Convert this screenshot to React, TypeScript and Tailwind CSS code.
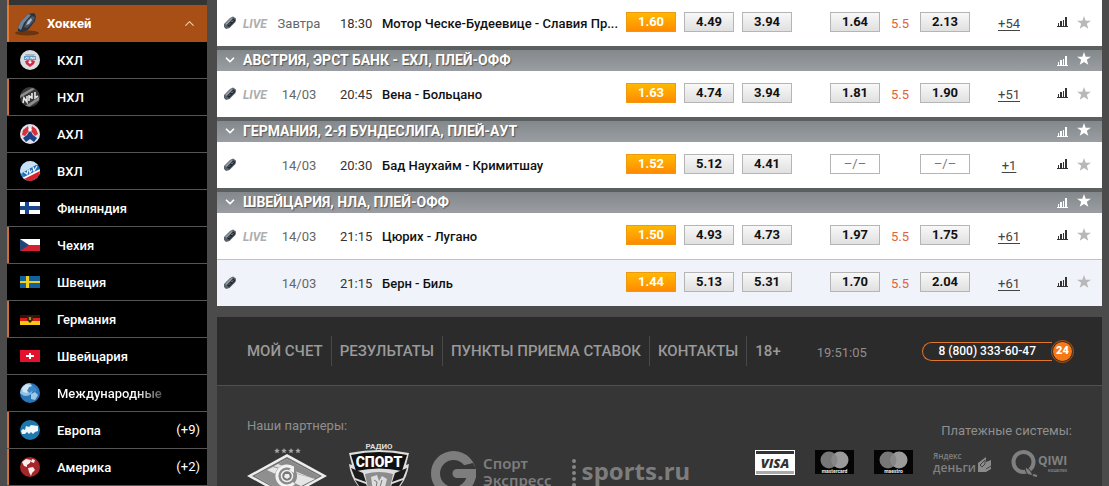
import { ReactNode } from 'react';
import { ChevronDown, ChevronUp } from 'lucide-react';

/* ── Data ── */

type League = { name: string; icon: ReactNode; accent?: boolean; count?: string; faded?: boolean };

type Match = {
  live: boolean;
  date: string;
  time: string;
  name: string;
  odds: string[];
  under: string | null;
  total: string;
  over: string | null;
  more: string;
  tinted?: boolean;
};

type Group = { title: string | null; matches: Match[] };

const groups: Group[] = [
  {
    title: null,
    matches: [
      { live: true, date: 'Завтра', time: '18:30', name: 'Мотор Ческе-Будеевице - Славия Пр...', odds: ['1.60', '4.49', '3.94'], under: '1.64', total: '5.5', over: '2.13', more: '+54' },
    ],
  },
  {
    title: 'АВСТРИЯ, ЭРСТ БАНК - ЕХЛ, ПЛЕЙ-ОФФ',
    matches: [
      { live: true, date: '14/03', time: '20:45', name: 'Вена - Больцано', odds: ['1.63', '4.74', '3.94'], under: '1.81', total: '5.5', over: '1.90', more: '+51' },
    ],
  },
  {
    title: 'ГЕРМАНИЯ, 2-Я БУНДЕСЛИГА, ПЛЕЙ-АУТ',
    matches: [
      { live: false, date: '14/03', time: '20:30', name: 'Бад Наухайм - Кримитшау', odds: ['1.52', '5.12', '4.41'], under: null, total: '', over: null, more: '+1' },
    ],
  },
  {
    title: 'ШВЕЙЦАРИЯ, НЛА, ПЛЕЙ-ОФФ',
    matches: [
      { live: true, date: '14/03', time: '21:15', name: 'Цюрих - Лугано', odds: ['1.50', '4.93', '4.73'], under: '1.97', total: '5.5', over: '1.75', more: '+61' },
      { live: false, date: '14/03', time: '21:15', name: 'Берн - Биль', odds: ['1.44', '5.13', '5.31'], under: '1.70', total: '5.5', over: '2.04', more: '+61', tinted: true },
    ],
  },
];

/* ── Sidebar icons ── */

function Round({ id, base, children }: { id: string; base: string; children: ReactNode }) {
  return (
    <svg width="20" height="20" viewBox="0 0 20 20" aria-hidden="true">
      <clipPath id={id}><circle cx="10" cy="10" r="10" /></clipPath>
      <g clipPath={`url(#${id})`}>
        <rect width="20" height="20" fill={base} />
        {children}
      </g>
    </svg>
  );
}

function Flag({ children }: { children: ReactNode }) {
  return <svg width="20" height="12" viewBox="0 0 20 12" aria-hidden="true">{children}</svg>;
}

const leagues: League[] = [
  {
    name: 'КХЛ',
    icon: (
      <Round id="khl" base="#d9dde0">
        <path d="M5 4h10l-1 2H6z" fill="#aab4bd" />
        <path d="M4 6h12v4H4z" fill="#5f9bcb" />
        <path d="M5 9l2-2M8 9V7M11 9V7l2 2V7M14 9l1-2" stroke="#e8f1f8" fill="none" />
        <path d="M5 11l3-1 2 1 2-1 3 1-1 3-4 3-4-3z" fill="#cf2a41" />
        <path d="M8 12l2 2 2-2-2-1z" fill="#fff" />
      </Round>
    ),
  },
  {
    name: 'НХЛ',
    accent: true,
    icon: (
      <Round id="nhl" base="#3a3a3a">
        <path d="M0 8L12 1l3 1L0 11zM5 19l14-9v3L9 20z" fill="#8d8d8d" />
        <path d="M3 16l1-5 3 4V9M9 14V8M9 11l3-2M12 12V6M15 5v6l3-2" stroke="#e6e6e6" strokeWidth="1.6" fill="none" />
      </Round>
    ),
  },
  {
    name: 'АХЛ',
    icon: (
      <Round id="ahl" base="#dfe3ea">
        <path d="M3 6l5-4 1 5-4 5-3-1z" fill="#d6323c" />
        <path d="M12 2l4 3 2 5-3 2-4-5z" fill="#d6323c" />
        <path d="M3 14l4-3 3-5 3 5 4 3-3 4-4-3-4 3z" fill="#1c3f86" />
        <path d="M8 6l2-3 2 3-2 2z" fill="#fff" />
      </Round>
    ),
  },
  {
    name: 'ВХЛ',
    icon: (
      <Round id="vhl" base="#2f8fd3">
        <path d="M0 0h20v3L3 13 0 12z" fill="#c8e1f3" />
        <path d="M2 12l14-8 4 1v5L5 17z" fill="#1e6fb9" />
        <path d="M4 11l3 2 1-4M9 8l1 4 2-3M13 6l1 4 3-5" stroke="#e9f4fb" strokeWidth="1.3" fill="none" />
        <path d="M2 17L20 8v5L6 20z" fill="#fff" />
        <path d="M4 18l16-8v10H5z" fill="#d8232a" />
      </Round>
    ),
  },
  {
    name: 'Финляндия',
    icon: <Flag><path d="M0 0h20v12H0z" fill="#fff" /><path d="M5 0h4v12H5zM0 4h20v4H0z" fill="#18478f" /></Flag>,
  },
  {
    name: 'Чехия',
    accent: true,
    icon: <Flag><path d="M0 0h20v6H0z" fill="#fff" /><path d="M0 6h20v6H0z" fill="#d4202f" /><path d="M0 0l9 6-9 6z" fill="#1f4678" /></Flag>,
  },
  {
    name: 'Швеция',
    icon: <Flag><path d="M0 0h20v12H0z" fill="#12619b" /><path d="M6 0h3v12H6zM0 5h20v2H0z" fill="#f2cf1f" /></Flag>,
  },
  {
    name: 'Германия',
    accent: true,
    icon: (
      <Flag>
        <path d="M0 2h20v3H0z" fill="#2c1513" /><path d="M0 5h20v3H0z" fill="#dc2016" /><path d="M0 8h20v4H0z" fill="#f5c816" />
        <path d="M7 3l3 1 3-1v4l-3 3-3-3z" fill="#3b2b0c" /><path d="M9 4h2v3H9z" fill="#b98a1b" />
      </Flag>
    ),
  },
  {
    name: 'Швейцария',
    icon: <Flag><path d="M0 0h20v12H0z" fill="#e2112d" /><path d="M9 3h2v2h3v2h-3v2H9V7H6V5h3z" fill="#fff" /></Flag>,
  },
  {
    name: 'Международные',
    faded: true,
    icon: (
      <Round id="world" base="#2a76b8">
        <circle cx="6" cy="6" r="7" fill="#8fc1e6" />
        <path d="M2 5l4-4 5 1-1 4-3 4-4-1z" fill="#cfe5f5" />
        <path d="M9 4l4-1 4 3-1 3-4-1-2 2-3-2z" fill="#3f86c2" />
        <path d="M11 11l4-2 3 3-3 5-4-1z" fill="#9cc9e9" />
      </Round>
    ),
  },
  {
    name: 'Европа',
    accent: true,
    count: '(+9)',
    icon: (
      <Round id="europe" base="#1d78ad">
        <path d="M1 11l2-2 2 1 1-4 3 1 2-2 7 1v5l-3 1-2 2-2-2-2 2-2-2-2 2H2z" fill="#eef7fb" />
      </Round>
    ),
  },
  {
    name: 'Америка',
    accent: true,
    count: '(+2)',
    icon: (
      <Round id="america" base="#a52529">
        <path d="M2 5l4-3 5 1-1 3-3 2v2L4 9zM12 2l3 1-1 3-3-1zM8 11l5-1 2 3-3 3-1 3-2-4z" fill="#fbeeee" />
      </Round>
    ),
  },
];

/* ── Table icons ── */

function Puck() {
  return (
    <svg width="14" height="14" viewBox="0 0 14 14" aria-hidden="true">
      <path d="M1 8l6-6 3-1.500 3 2-.5 3.500-6 6-3.500 1L1 11z" fill="#59616b" />
      <path d="M2 8l5.500-5.500 2.500-1-2 3-4 4.500z" fill="#939ba4" />
      <path d="M5 10L11.500 3.500" stroke="#22272d" strokeWidth="3" />
      <path d="M6 8.500l1-1M8.500 6L10 4.500" stroke="#b5bcc2" />
    </svg>
  );
}

function BigPuck() {
  return (
    <svg width="26" height="24" viewBox="0 0 26 24" aria-hidden="true">
      <ellipse cx="12" cy="21" rx="12" ry="2.500" fill="#6b330e" />
      <path d="M3 16l3-7 7-7 6-1 2 3-1 5-7 9-6 2-4-1z" fill="#2b323b" />
      <path d="M3 16l3-7 7-7 3 1-7 8-3 7z" fill="#6f8396" />
      <path d="M9 15l3-6 5-5 3 1-2 5-6 6z" fill="#48566a" />
      <path d="M11 13l2-4 3-3 1 2-3 4z" fill="#a9bccb" />
    </svg>
  );
}

function Bars() {
  return (
    <svg width="11" height="10" viewBox="0 0 11 10" fill="currentColor" aria-hidden="true">
      <path d="M0 9h11v1H0zM1 6h1v3H1zM3 4h2v5H3zM6 3h1v6H6zM8 0h2v9H8z" />
    </svg>
  );
}

function Star() {
  return (
    <svg width="14" height="13" viewBox="0 0 14 13" fill="currentColor" aria-hidden="true">
      <path d="M7 0l1.7 4.7H14L9.8 7.8l1.5 5L7 9.9l-4.3 2.9 1.5-5L0 4.7h5.3z" />
    </svg>
  );
}

/* ── Events ── */

function Odd({ value, favourite }: { value: string | null; favourite?: boolean }) {
  const look = favourite
    ? 'border-[#ee9a10] bg-linear-to-b from-[#ffb900] to-[#ff8a00] text-white'
    : value
      ? 'border-[#b5b5b5] bg-linear-to-b from-[#f8f8f8] to-[#e0e0e0] text-[#111]'
      : 'border-[#b5b5b5] bg-white text-[#777]';
  return (
    <td className="pb-0.5">
      <button className={`mx-auto block h-5 w-[50px] border text-[13px] leading-[18px] font-bold ${look}`}>
        {value ?? <span className="font-normal">–/–</span>}
      </button>
    </td>
  );
}

function MatchRow({ match }: { match: Match }) {
  return (
    <tr className={match.tinted ? 'h-[47px] border-t border-[#bfc1c4] bg-[#f0f3fa]' : 'h-[46px] bg-white'}>
      <td className="pl-1.5"><Puck /></td>
      <td className="pt-0.5 pl-0.5 text-xs font-bold text-[#adadad] italic">{match.live && 'LIVE'}</td>
      <td className="pt-0.5 text-center text-[#666]">{match.date}</td>
      <td className="pt-0.5 pl-[11px] text-[#333]">{match.time}</td>
      <td className="truncate pt-0.5 font-medium text-[#111]">{match.name}</td>
      {match.odds.map((odd, i) => <Odd key={i} value={odd} favourite={i === 0} />)}
      <td />
      <Odd value={match.under} />
      <td className="pt-0.5 text-center text-[#e0623a]">{match.total}</td>
      <Odd value={match.over} />
      <td className="pt-0.5 text-center"><a href="#" className="text-[#444] underline underline-offset-2">{match.more}</a></td>
      <td className="pb-0.5">
        <button className="ml-[13px] block text-[#333]" aria-label="Статистика"><Bars /></button>
      </td>
      <td className="pb-0.5">
        <button className="ml-[3px] block text-[#b8b8b8]" aria-label="В избранное"><Star /></button>
      </td>
    </tr>
  );
}

function EventsTable() {
  return (
    <table className="w-full table-fixed border-collapse text-[13px]">
      <colgroup>
        <col className="w-6" />
        <col className="w-7" />
        <col className="w-[60px]" />
        <col className="w-[53px]" />
        <col />
        <col className="w-[58px]" />
        <col className="w-[58px]" />
        <col className="w-[58px]" />
        <col className="w-[30px]" />
        <col className="w-[58px]" />
        <col className="w-8" />
        <col className="w-[58px]" />
        <col className="w-[70px]" />
        <col className="w-[30px]" />
        <col className="w-7" />
      </colgroup>
      {groups.map((group, g) => (
        <tbody key={g}>
          {group.title && (
            <tr className="h-[25px] bg-linear-to-b from-[#5c5f60] from-15% via-[#83888b] via-15% to-[#9a9ea3] text-white">
              <td className="pt-[3px] pl-1.5">
                <button className="block" aria-label="Свернуть"><ChevronDown size={14} strokeWidth={3} /></button>
              </td>
              <th colSpan={12} className="pt-0.5 pl-0.5 text-left text-sm leading-5 font-bold text-shadow-[1px_1px_1px_#555]">
                {group.title}
              </th>
              <td className="pt-1">
                <button className="ml-[13px] block" aria-label="Статистика"><Bars /></button>
              </td>
              <td>
                <button className="ml-[3px] block" aria-label="В избранное"><Star /></button>
              </td>
            </tr>
          )}
          {group.matches.map(match => <MatchRow key={match.name} match={match} />)}
        </tbody>
      ))}
    </table>
  );
}

/* ── Sidebar ── */

function Sidebar() {
  return (
    <nav className="w-[200px] shrink-0 bg-black text-[13px] font-medium text-white">
      <div className="h-[5px] border-l-2 border-[#c96f3a] bg-[#343434]" />
      <button className="flex h-[37px] w-full items-center border-l-2 border-[#e07a35] bg-[#a84f16] pr-2.5 pl-1.5 text-left">
        <BigPuck />
        <span className="ml-1.5 flex-1 pt-px font-bold">Хоккей</span>
        <ChevronUp size={15} className="text-[#f0c4a5]" />
      </button>
      <ul>
        {leagues.map(league => (
          <li key={league.name} className="border-b border-[#555]">
            <a
              href="#"
              className={`flex h-9 items-center border-l-2 pr-[7px] pl-[11px] ${league.accent ? 'border-[#c96f3a]' : 'border-black'}`}
            >
              {league.icon}
              <span
                className={`ml-[17px] pt-0.5 ${league.faded ? 'bg-linear-to-r from-white from-75% to-[#555] bg-clip-text text-transparent' : ''}`}
              >
                {league.name}
              </span>
              <span className="ml-auto font-normal">{league.count}</span>
            </a>
          </li>
        ))}
      </ul>
    </nav>
  );
}

/* ── Footer logos ── */

function Spartak() {
  return (
    <svg width="80" height="60" viewBox="0 0 80 60" aria-hidden="true">
      <g fill="#a5a5a5">
        {[30, 37, 44, 51].map(x => (
          <path key={x} d={`M${x} 5l.8 1.8 2 .2-1.5 1.3.5 2-1.8-1-1.8 1 .5-2L${x - 2.8} 7l2-.2z`} />
        ))}
      </g>
      <path d="M40 11l40 22-40 22L0 33z" fill="#ededed" />
      <path d="M40 14l35 19-35 19L5 33z" fill="#6f6f6f" />
      <path d="M40 16l32 17-32 18L8 33z" fill="#e2e2e2" />
      <path d="M40 16l32 17-5 3-36-15z" fill="#8a8a8a" />
      <path d="M8 33l18-10 42 13-28 15z" fill="#8f8f8f" />
      <path d="M20 27l6-3 42 12-14 7z" fill="#e6e6e6" />
      <circle cx="39" cy="33" r="11" fill="#8a8a8a" />
      <path d="M46 25a10 10 0 1 0 1 15" stroke="#f2f2f2" strokeWidth="3" fill="none" />
      <path d="M47 23v7l-5-3" fill="#f2f2f2" />
      <circle cx="40" cy="33" r="5.500" fill="#777" stroke="#eee" strokeWidth="1.500" />
      <path d="M38 31h4l1 3-3 2-3-2z" fill="#eee" />
    </svg>
  );
}

function RadioSport() {
  return (
    <svg width="64" height="60" viewBox="0 0 64 60" aria-hidden="true">
      <text x="32" y="6" textAnchor="middle" fontSize="8" fontWeight="700" fill="#ddd">РАДИО</text>
      <path d="M2 10q30-6 60 0l-3 12 3-1q-3 26-30 38Q5 46 2 21l3 1z" fill="#ddd" />
      <path d="M4 12q28-6 56 0l-5 16q-23-5-46 0z" fill="#111" />
      <path d="M4 25l12 5 3 9-11-4zM60 25l-12 5-3 9 11-4zM8 37l11 4 4 9-9-4zM56 37l-11 4-4 9 9-4z" fill="#1d1d1d" />
      <path d="M18 31q14-4 28 0l-4 19-10 7-10-7z" fill="#8c8c8c" />
      <path d="M24 34l6-2 2 6 3-5 5 3-3 12-6 5-5-5z" fill="#dcdcdc" />
      <path d="M27 37l3 2-1 6M35 37l-2 7" stroke="#777" fill="none" />
      <text x="32" y="24" textAnchor="middle" fontSize="14" fontWeight="900" fill="#fff">СПОРТ</text>
    </svg>
  );
}

function SportExpress() {
  return (
    <div className="flex gap-[7px] pt-2">
      <svg width="45" height="45" viewBox="0 0 45 45" aria-hidden="true">
        <circle cx="22.500" cy="22.500" r="18" fill="none" stroke="#7d7d7d" strokeWidth="9" />
        <path d="M30 15l12-3 3 6H30z" fill="#363636" />
        <path d="M26 18h19v9H26a4.500 4.500 0 0 1 0-9z" fill="#7d7d7d" />
      </svg>
      <p className="pt-1 font-['Noto_Sans'] text-[15px] leading-[17px] font-semibold text-[#7d7d7d]">
        Спорт<br />Экспресс
      </p>
    </div>
  );
}

function SportsRu() {
  return (
    <div className="flex gap-1.5 pt-2">
      <svg width="4" height="40" viewBox="0 0 4 40" fill="#858585" aria-hidden="true">
        {[10, 16, 22, 28, 34].map(y => <circle key={y} cx="2" cy={y} r="2" />)}
      </svg>
      <span className="font-['Noto_Sans'] text-2xl leading-10 font-bold text-[#7d7d7d]">sports.ru</span>
    </div>
  );
}

function Visa() {
  return (
    <svg width="40" height="25" viewBox="0 0 40 25" aria-hidden="true">
      <path d="M0 0h40v25H0z" fill="#fff" />
      <path d="M1 1h38v3H1z" fill="#333" />
      <path d="M1 21h38v3H1z" fill="#aaa" />
      <text x="20" y="18" textAnchor="middle" fontSize="13" fontWeight="800" fontStyle="italic" fontFamily="Open Sans" fill="#333">VISA</text>
    </svg>
  );
}

function Circles({ label }: { label: string }) {
  return (
    <svg width="39" height="24" viewBox="0 0 39 24" aria-hidden="true">
      <path d="M0 0h39v24H0z" fill="#050505" />
      <circle cx="14" cy="10" r="8.500" fill="#777" />
      <circle cx="25" cy="10" r="8.500" fill="#9a9a9a" />
      <path d="M19.500 3.500a8.500 8.500 0 0 1 0 13 8.500 8.500 0 0 1 0-13z" fill="#878787" />
      <text x="19.500" y="22.500" textAnchor="middle" fontSize="5" fontWeight="700" fill="#eee">{label}</text>
    </svg>
  );
}

function YandexMoney() {
  return (
    <div className="flex items-end gap-0.5 text-[#808080]">
      <p className="font-['Open_Sans'] font-semibold">
        <span className="block text-[8px] leading-[11px]">Яндекс</span>
        <span className="block text-xs leading-[14px]">деньги</span>
      </p>
      <svg width="13" height="16" viewBox="0 0 13 16" className="mb-0.5" aria-hidden="true">
        <path d="M0 6l8-6v5l5-2v9l-5 3H0z" fill="#8b8b8b" />
        <path d="M2 8l5-5v4l-3 3zM8 12l5-3" stroke="#444" fill="none" />
      </svg>
    </div>
  );
}

function Qiwi() {
  return (
    <svg width="61" height="27" viewBox="0 0 61 27" aria-hidden="true">
      <circle cx="12.500" cy="12" r="10" fill="none" stroke="#808080" strokeWidth="4" />
      <path d="M14 17q5 1 8 8-5 1-7-3z" fill="#808080" stroke="#363636" />
      <path d="M22 25l4 1" stroke="#808080" strokeWidth="2" />
      <text x="27" y="15" fontSize="12" fontWeight="700" fontFamily="Open Sans" fill="#808080">QIWI</text>
      <text x="37" y="22" fontSize="4" fontWeight="700" fill="#808080">КОШЕЛЕК</text>
    </svg>
  );
}

/* ── Footer ── */

const footerLinks = ['МОЙ СЧЕТ', 'РЕЗУЛЬТАТЫ', 'ПУНКТЫ ПРИЕМА СТАВОК', 'КОНТАКТЫ', '18+'];

function Footer() {
  return (
    <footer className="mt-[11px] bg-[#363636] text-[13px] text-[#8f8f8f]">
      <div className="flex h-[69px] items-center border-b border-[#505050] bg-[#2b2b2b] pr-[29px] pl-[22px]">
        <nav className="flex divide-x divide-[#484848]">
          {footerLinks.map(link => (
            <a key={link} href="#" className="px-2 text-[15px] leading-[30px] font-medium text-[#9a9a9a]">{link}</a>
          ))}
        </nav>
        <time className="ml-7 pt-1">19:51:05</time>
        <a href="tel:88003336047" className="ml-auto flex items-center font-medium text-white">
          <span className="h-[19px] rounded-l-full border border-r-0 border-[#e0762c] pr-4 pl-4 text-xs leading-[17px]">
            8 (800) 333-60-47
          </span>
          <span className="flex size-[21px] items-center justify-center rounded-full border border-[#2b2b2b] bg-[#f57a17] text-[11px] font-black outline outline-[#a8541b]">
            24
          </span>
        </a>
      </div>
      <div className="flex items-start justify-between px-[30px]">
        <div className="pt-[30px]">
          <p className="leading-5">Наши партнеры:</p>
          <div className="mt-[7px] flex items-start gap-5">
            <Spartak />
            <RadioSport />
            <SportExpress />
            <SportsRu />
          </div>
        </div>
        <div className="pt-[35px]">
          <p className="text-right leading-5">Платежные системы:</p>
          <div className="mt-[9px] flex items-start justify-end gap-5">
            <Visa />
            <Circles label="mastercard" />
            <Circles label="maestro" />
            <YandexMoney />
            <Qiwi />
          </div>
        </div>
      </div>
    </footer>
  );
}

export default function App() {
  return (
    <div className="flex h-screen gap-2.5 overflow-hidden bg-[#4b4b4b] px-[7px] font-[Roboto,sans-serif]">
      <Sidebar />
      <main className="min-w-0 flex-1">
        <EventsTable />
        <Footer />
      </main>
    </div>
  );
}
